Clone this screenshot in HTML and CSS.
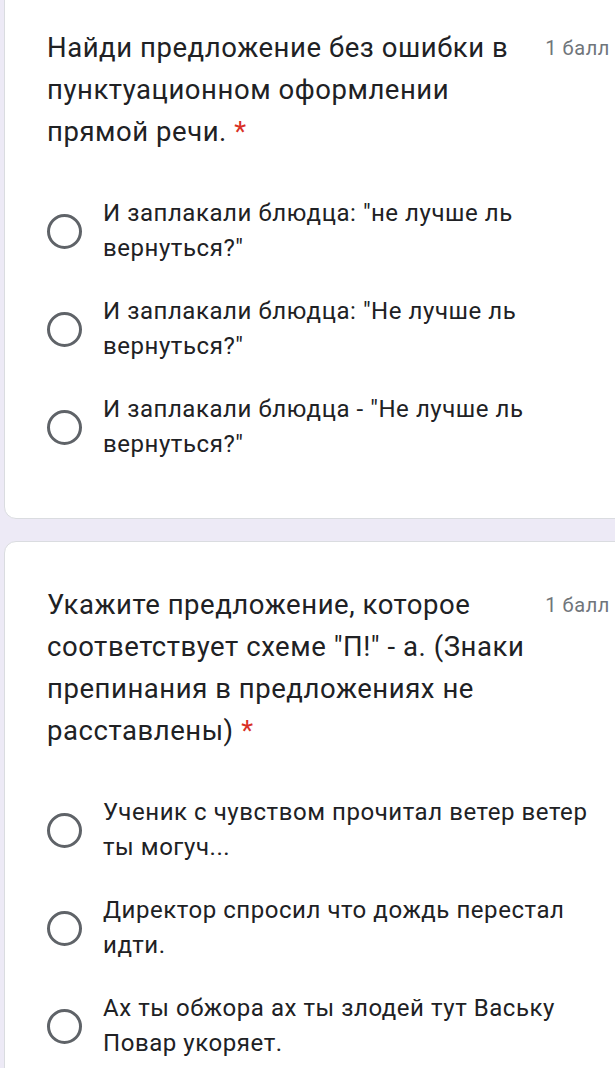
FILE: index.html
```html
<!doctype html>
<html lang="ru">
  <head>
    <meta charset="utf-8" />
    <title>Тест</title>
    <link rel="stylesheet" href="styles.css">
  </head>
  <body>
    <div class="form">
      <!-- Question 1 -->
      <div class="card card-first">
        <div class="question-head">
          <div class="question-title">Найди предложение без ошибки в пунктуационном оформлении прямой речи. <span class="required">*</span></div>
          <div class="points">1 балл</div>
        </div>
        <div class="options">
          <label class="option"><span class="radio"></span><span class="option-text">И заплакали блюдца: "не лучше ль вернуться?"</span></label>
          <label class="option"><span class="radio"></span><span class="option-text">И заплакали блюдца: "Не лучше ль вернуться?"</span></label>
          <label class="option"><span class="radio"></span><span class="option-text">И заплакали блюдца - "Не лучше ль вернуться?"</span></label>
        </div>
      </div>

      <!-- Question 2 -->
      <div class="card">
        <div class="question-head">
          <div class="question-title">Укажите предложение, которое соответствует схеме "П!" - а. (Знаки препинания в предложениях не расставлены) <span class="required">*</span></div>
          <div class="points">1 балл</div>
        </div>
        <div class="options">
          <label class="option"><span class="radio"></span><span class="option-text">Ученик с чувством прочитал ветер ветер ты могуч...</span></label>
          <label class="option"><span class="radio"></span><span class="option-text">Директор спросил что дождь перестал идти.</span></label>
          <label class="option"><span class="radio"></span><span class="option-text">Ах ты обжора ах ты злодей тут Ваську Повар укоряет.</span></label>
        </div>
      </div>
    </div>
  </body>
</html>
```

FILE: styles.css
```css
* {
  box-sizing: border-box;
}

html,
body {
  overflow: hidden;
}

body {
  margin: 0;
  background: #edeaf6;
  color: #202124;
  font-family: Roboto, 'Noto Sans', Arial, sans-serif;
}

.form {
  display: flex;
  flex-direction: column;
  gap: 22px;
  padding-left: 4px;
}

.card {
  background: #fff;
  border: 1px solid #dadce0;
  border-radius: 12px;
  margin-right: -20px;
  padding: 42px 24px 56px 42px;
}

.card-first {
  margin-top: -20px;
  padding-top: 46px;
}

.question-head {
  display: flex;
  align-items: flex-start;
  gap: 16px;
}

.question-title {
  flex: 1;
  font-size: 27.5px;
  line-height: 42px;
  letter-spacing: 0.55px;
}

.required {
  color: #d93025;
}

.points {
  font-size: 20px;
  line-height: 42px;
  color: #70757a;
  letter-spacing: 0.6px;
  white-space: nowrap;
}

.options {
  display: flex;
  flex-direction: column;
  gap: 28px;
  margin-top: 43px;
}

.option {
  display: flex;
  align-items: center;
  gap: 21px;
}

.radio {
  flex: none;
  width: 35px;
  height: 35px;
  border: 3px solid #5f6368;
  border-radius: 50%;
}

.option-text {
  font-size: 24px;
  line-height: 35px;
  letter-spacing: 0.55px;
}
```
